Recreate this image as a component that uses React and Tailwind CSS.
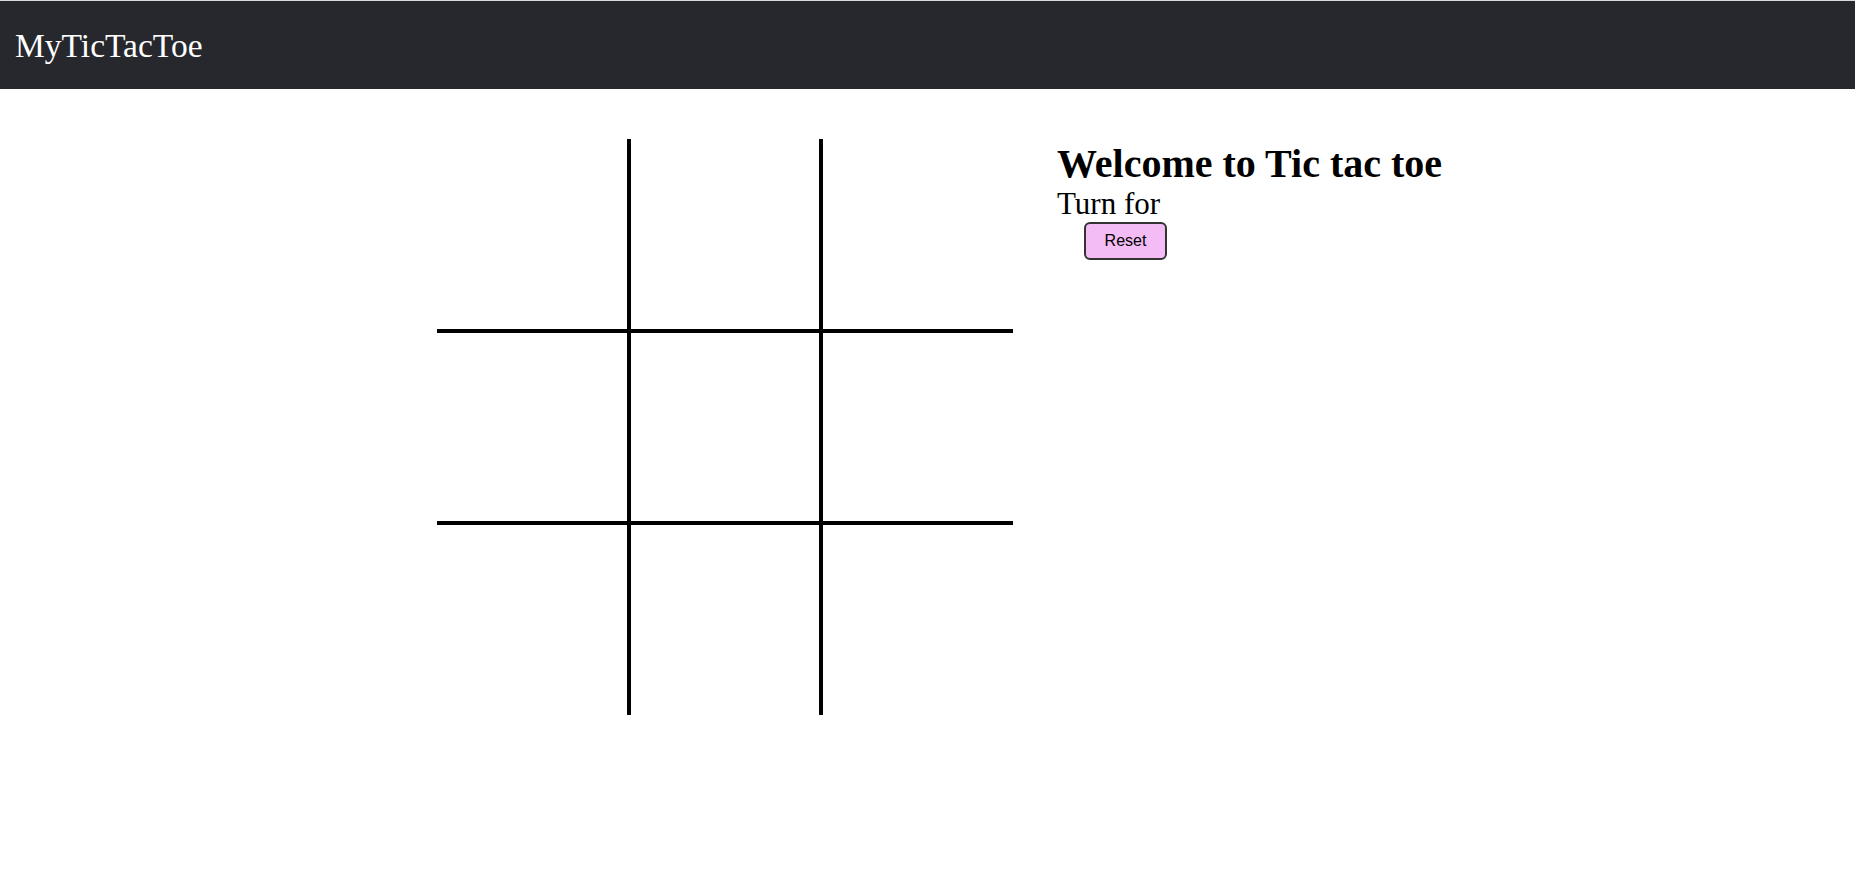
import React, { useState } from 'react';

const serif = { fontFamily: '"Liberation Serif", "Times New Roman", serif' };

// one square of the board; inner edges get a 2px border so neighbours form a 4px line
function Square({ index, value, onClick }) {
    const row = Math.floor(index / 3);
    const col = index % 3;
    const classes = [
        'w-[192px] h-[192px] border-black flex items-center justify-center text-[96px]',
        col > 0 ? 'border-l-2' : '',
        col < 2 ? 'border-r-2' : '',
        row > 0 ? 'border-t-2' : '',
        row < 2 ? 'border-b-2' : '',
    ].join(' ');
    return (
        <div className={classes} style={serif} onClick={onClick}>
            {value}
        </div>
    );
}

export default function App() {
    const [squares, setSquares] = useState(Array(9).fill(''));
    const [turn, setTurn] = useState('');

    const play = (i) => {
        if (squares[i]) return;
        const next = turn === 'X' ? 'O' : 'X';
        const copy = squares.slice();
        copy[i] = next;
        setSquares(copy);
        setTurn(next);
    };

    const reset = () => {
        setSquares(Array(9).fill(''));
        setTurn('');
    };

    return (
        <div className="min-h-screen bg-white text-black" style={serif}>
            <nav className="h-[89px] border-t border-[#d9d9d9] bg-[#27282d] flex items-center px-[15px] pt-[1px]">
                <span className="text-[33.5px] text-white leading-none">MyTicTacToe</span>
            </nav>

            <main className="flex items-start pl-[437px] pt-[50px] gap-[44px]">
                <div className="grid grid-cols-3 w-[576px]">
                    {squares.map((v, i) => (
                        <Square key={i} index={i} value={v} onClick={() => play(i)} />
                    ))}
                </div>

                <div className="pt-[1px]">
                    <h1 className="text-[40px] font-bold leading-[48px]">Welcome to Tic tac toe</h1>
                    <div className="text-[31px] leading-[32px]">Turn for {turn}</div>
                    <button
                        onClick={reset}
                        className="ml-[27px] mt-[2px] w-[83px] h-[38px] rounded-[6px] border-2 border-[#333] bg-[#f4bcf4] text-[16px] text-black"
                        style={{ fontFamily: '"Liberation Sans", Arial, sans-serif' }}
                    >
                        Reset
                    </button>
                </div>
            </main>
        </div>
    );
}
